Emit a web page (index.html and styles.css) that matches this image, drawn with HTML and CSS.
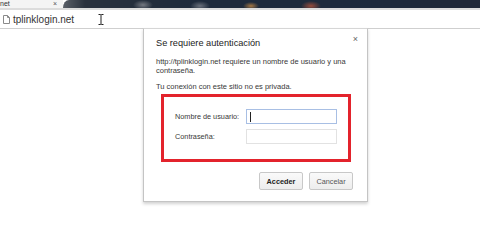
FILE: index.html
```html
<!DOCTYPE html>
<html lang="es">
<head>
    <meta charset="UTF-8">
    <meta name="viewport" content="width=device-width, initial-scale=1.0">
    <title>tplinklogin.net</title>
    <link rel="stylesheet" href="styles.css">
</head>
<body>
    <div class="tabstrip">
        <div class="tab">
            <span class="tab-title">net</span>
            <span class="tab-close">×</span>
        </div>
        <div class="wallpaper"></div>
    </div>

    <div class="toolbar">
        <svg class="page-icon" width="7" height="9" viewBox="0 0 7 9">
            <path d="M0.5 0.5 H4.5 L6.5 2.5 V8.5 H0.5 Z" fill="#fff" stroke="#8a8a8a" stroke-width="1"/>
            <path d="M4.5 0.5 V2.5 H6.5" fill="none" stroke="#8a8a8a" stroke-width="1"/>
        </svg>
        <span class="url">tplinklogin.net</span>
        <svg class="ibeam" width="6" height="11" viewBox="0 0 6 11">
            <path d="M0.5 0.5 H2.5 L3 1 L3.5 0.5 H5.5 M3 1 V10 M0.5 10.5 H2.5 L3 10 L3.5 10.5 H5.5" fill="none" stroke="#222" stroke-width="1"/>
        </svg>
    </div>

    <div class="page">
        <div class="dialog">
            <div class="dialog-header">
                <h2>Se requiere autenticación</h2>
                <span class="close">×</span>
            </div>

            <p class="msg">http://tplinklogin.net requiere un nombre de usuario y una contraseña.</p>
            <p class="msg msg-second">Tu conexión con este sitio no es privada.</p>

            <div class="login-box">
                <div class="row">
                    <label>Nombre de usuario:</label>
                    <div class="field focused"><span class="caret"></span></div>
                </div>
                <div class="row">
                    <label>Contraseña:</label>
                    <div class="field"></div>
                </div>
            </div>

            <div class="actions">
                <button class="btn btn-primary">Acceder</button>
                <button class="btn">Cancelar</button>
            </div>
        </div>
    </div>
</body>
</html>
```

FILE: styles.css
```css
* {
    margin: 0;
    padding: 0;
    box-sizing: border-box;
}

body {
    font-family: "Liberation Sans", Arial, sans-serif;
    background-color: #fff;
    color: #333;
    width: 480px;
    height: 243px;
    overflow: hidden;
}

/* Pasek kart */
.tabstrip {
    display: flex;
    height: 8px;
    border-bottom: 2px solid #dcdcdc;
    box-sizing: content-box;
}

.tab {
    width: 63px;
    background-color: #f4f4f4;
    display: flex;
    justify-content: space-between;
    align-items: flex-start;
    padding: 0 6px 0 0;
    font-size: 7px;
    line-height: 8px;
    color: #333;
}

.tab-close {
    font-size: 7px;
    line-height: 8px;
    color: #555;
}

.wallpaper {
    flex: 1;
    border-top-left-radius: 6px 8px;
    background:
        radial-gradient(ellipse 10px 5px at 80px 5px, rgba(170, 170, 175, 0.6), transparent),
        radial-gradient(ellipse 10px 5px at 137px 6px, rgba(180, 180, 185, 0.5), transparent),
        radial-gradient(ellipse 8px 4px at 188px 6px, rgba(220, 150, 70, 0.7), transparent),
        radial-gradient(ellipse 10px 5px at 248px 6px, rgba(200, 90, 60, 0.7), transparent),
        linear-gradient(90deg, #5a6068 0, #2a323e 22px, #1f2b3c 120px, #1d2a3d 300px, #202838 100%);
}

/* Pasek adresu */
.toolbar {
    display: flex;
    align-items: center;
    height: 19px;
    padding-left: 3px;
    border-bottom: 1px solid #cfcfcf;
    background-color: #fff;
}

.page-icon {
    margin-right: 3px;
}

.url {
    font-size: 10px;
    color: #333;
}

.ibeam {
    margin-left: 24px;
}

/* Strona z oknem logowania */
.page {
    padding-left: 143px;
}

.dialog {
    width: 225px;
    height: 174px;
    margin-top: -1px;
    background-color: #fff;
    border: 1px solid #c4c4c4;
    border-top-color: #d6d6d6;
    box-shadow: 0 2px 3px rgba(0, 0, 0, 0.18);
    padding: 6px 14px 0 12px;
}

.dialog-header {
    display: flex;
    justify-content: space-between;
    align-items: flex-start;
    height: 16px;
}

.dialog-header h2 {
    font-size: 9.2px;
    font-weight: normal;
    line-height: 17px;
    color: #222;
}

.close {
    font-size: 9px;
    line-height: 9px;
    color: #666;
    margin-right: -5px;
}

.msg {
    font-size: 7.5px;
    line-height: 9px;
    color: #383838;
    margin-top: 6px;
    margin-right: -4px;
}

.msg-second {
    margin-top: 7px;
}

/* Czerwona ramka wokół pól */
.login-box {
    width: 190px;
    height: 68px;
    margin: 3px 0 0 5px;
    border: 3px solid #e3232c;
    padding: 12px 0 0 11px;
    display: flex;
    flex-direction: column;
    gap: 5px;
}

.row {
    display: flex;
    align-items: center;
    height: 15px;
}

.row label {
    width: 71px;
    font-size: 7.3px;
    color: #383838;
}

.field {
    width: 91px;
    height: 15px;
    border: 1px solid #e2e2e2;
    background-color: #fff;
    padding: 2px 3px;
}

.field.focused {
    border-color: #a8bfe4;
}

.caret {
    display: block;
    width: 1px;
    height: 10px;
    background-color: #222;
}

/* Przyciski */
.actions {
    display: flex;
    justify-content: flex-end;
    gap: 6px;
    margin-top: 10px;
}

.btn {
    width: 44px;
    height: 18px;
    font-family: "Liberation Sans", Arial, sans-serif;
    font-size: 7.3px;
    color: #555;
    background: linear-gradient(#fafafa, #ededed);
    border: 1px solid #c8c8c8;
    border-radius: 2px;
}

.btn-primary {
    font-weight: bold;
    color: #222;
}
```
